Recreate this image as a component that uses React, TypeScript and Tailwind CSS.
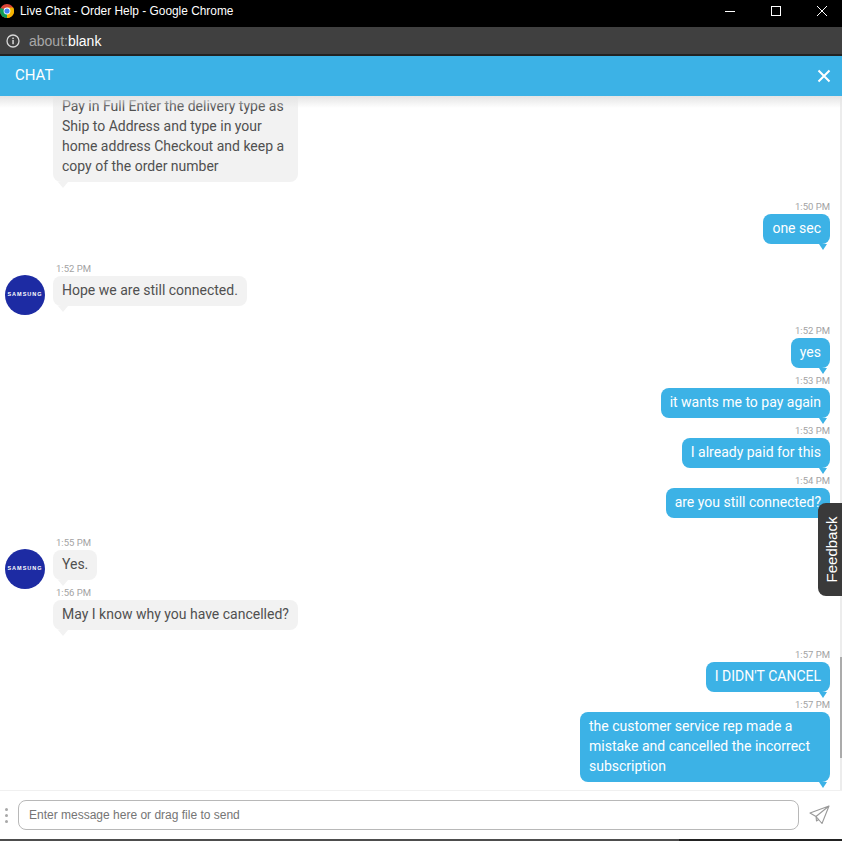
import React from "react";

const font = "font-['Roboto',sans-serif]";

function Avatar() {
  return (
    <div className="w-10 h-10 rounded-full bg-[#1d2ba3] flex items-center justify-center shrink-0 mt-[-1px] mb-[-9px]">
      <span className="font-['Liberation_Sans',sans-serif] font-bold text-white text-[5.5px] tracking-[1px] leading-none">SAMSUNG</span>
    </div>
  );
}

function AgentMsg({ time, lines, avatar, wide }: { time?: string; lines: string[]; avatar?: boolean; wide?: boolean }) {
  return (
    <div className="flex items-start pl-[5px]">
      <div className="w-10 shrink-0 pt-[16px]">{avatar && <Avatar />}</div>
      <div className="ml-2 flex flex-col items-start">
        {time && <div className="h-4 pl-[3px] pt-[1px] text-[9.5px] leading-4 text-[#a3a3a3]">{time}</div>}
        <div className={`relative bg-[#f2f2f2] rounded-lg pl-[9px] pr-[9px] pt-[4px] pb-[6px] text-[14px] leading-5 text-[#505050] whitespace-nowrap ${wide ? "w-[245px]" : ""}`}>
          {lines.map((l) => (
            <div key={l}>{l}</div>
          ))}
          <div className="absolute left-[5px] top-full w-0 h-0 border-l-[5px] border-r-[5px] border-t-[6px] border-l-transparent border-r-transparent border-t-[#f2f2f2]" />
        </div>
      </div>
    </div>
  );
}

function UserMsg({ time, lines, wide }: { time: string; lines: string[]; wide?: boolean }) {
  return (
    <div className="flex flex-col items-end pr-3">
      <div className="h-4 pt-[1px] text-[9.5px] leading-4 text-[#a3a3a3]">{time}</div>
      <div className={`relative bg-[#3cb2e6] rounded-lg pl-[9px] pr-[9px] pt-[4px] pb-[6px] text-[14px] leading-5 text-white whitespace-nowrap ${wide ? "w-[250px]" : ""}`}>
        {lines.map((l) => (
          <div key={l}>{l}</div>
        ))}
        <div className="absolute right-[3px] top-full w-0 h-0 border-l-[4px] border-r-[4px] border-t-[6px] border-l-transparent border-r-transparent border-t-[#3cb2e6]" />
      </div>
    </div>
  );
}

export default function App() {
  return (
    <div className={`w-[842px] h-[841px] flex flex-col overflow-hidden bg-white relative ${font}`}>
      {/* window title bar */}
      <div className="h-[27px] bg-black flex items-center shrink-0 pb-[5px]">
        <svg width="14" height="14" viewBox="0 0 14 14" className="shrink-0">
          <circle cx="7" cy="7" r="7" fill="#db4437" />
          <path d="M7 7 L7 14 A7 7 0 0 0 13.2 3.5 L7 3.5 Z" fill="#f4b400" />
          <path d="M7 7 L7 14 A7 7 0 0 1 0.8 3.8 Z" fill="#0f9d58" />
          <circle cx="7" cy="7" r="3.4" fill="#fff" />
          <circle cx="7" cy="7" r="2.6" fill="#4285f4" />
        </svg>
        <span className="ml-[6px] mt-[2px] font-['Liberation_Sans',sans-serif] text-[11.9px] text-white whitespace-nowrap">Live Chat - Order Help - Google Chrome</span>
        <div className="ml-auto flex items-center">
          <svg width="12" height="12" viewBox="0 0 12 12" className="mr-[34px]">
            <path d="M1 6.5H11" stroke="#fff" strokeWidth="1" />
          </svg>
          <svg width="12" height="12" viewBox="0 0 12 12" className="mr-[34px]">
            <rect x="1.5" y="1.5" width="9" height="9" fill="none" stroke="#fff" strokeWidth="1" />
          </svg>
          <svg width="12" height="12" viewBox="0 0 12 12" className="mr-[14px]">
            <path d="M1 1L11 11M11 1L1 11" stroke="#fff" strokeWidth="1" />
          </svg>
        </div>
      </div>
      {/* address bar */}
      <div className="h-[27px] bg-[#404040] flex items-center shrink-0 pl-[6px] pt-[1px]">
        <svg width="14" height="14" viewBox="0 0 14 14">
          <circle cx="7" cy="7" r="6" fill="none" stroke="#d8d8d8" strokeWidth="1.3" />
          <rect x="6.3" y="6" width="1.5" height="4.2" fill="#d8d8d8" />
          <rect x="6.3" y="3.6" width="1.5" height="1.5" fill="#d8d8d8" />
        </svg>
        <span className="ml-[9px] font-['Liberation_Sans',sans-serif] text-[14px] text-[#a8a8a8]">
          about:<span className="text-white">blank</span>
        </span>
      </div>
      <div className="h-[2px] bg-[#222222] shrink-0" />
      {/* header */}
      <div className="h-10 bg-[#3cb2e6] flex items-center justify-between pl-[15px] pr-[11px] pb-[1px] shrink-0 relative z-10">
        <span className="text-[15px] text-white">CHAT</span>
        <svg width="14" height="14" viewBox="0 0 14 14">
          <path d="M1.5 1.5L12.5 12.5M12.5 1.5L1.5 12.5" stroke="#fff" strokeWidth="2" />
        </svg>
      </div>
      {/* messages */}
      <div className="relative flex-1 min-h-0 flex flex-col justify-end overflow-hidden pb-2">
        <div className="absolute top-0 left-0 right-0 h-3 bg-gradient-to-b from-[#e4e4e4] to-transparent z-10" />
        <AgentMsg wide lines={["Pay in Full Enter the delivery type as", "Ship to Address and type in your", "home address Checkout and keep a", "copy of the order number"]} />
        <div className="h-4 shrink-0" />
        <UserMsg time="1:50 PM" lines={["one sec"]} />
        <div className="h-4 shrink-0" />
        <AgentMsg time="1:52 PM" lines={["Hope we are still connected."]} avatar />
        <div className="h-4 shrink-0" />
        <UserMsg time="1:52 PM" lines={["yes"]} />
        <div className="h-1 shrink-0" />
        <UserMsg time="1:53 PM" lines={["it wants me to pay again"]} />
        <div className="h-1 shrink-0" />
        <UserMsg time="1:53 PM" lines={["I already paid for this"]} />
        <div className="h-1 shrink-0" />
        <UserMsg time="1:54 PM" lines={["are you still connected?"]} />
        <div className="h-4 shrink-0" />
        <AgentMsg time="1:55 PM" lines={["Yes."]} avatar />
        <div className="h-1 shrink-0" />
        <AgentMsg time="1:56 PM" lines={["May I know why you have cancelled?"]} />
        <div className="h-4 shrink-0" />
        <UserMsg time="1:57 PM" lines={["I DIDN'T CANCEL"]} />
        <div className="h-1 shrink-0" />
        <UserMsg wide time="1:57 PM" lines={["the customer service rep made a", "mistake and cancelled the incorrect", "subscription"]} />
        <div className="absolute right-0 top-0 bottom-0 w-[2px] bg-[#ececec]" />
        <div className="absolute right-0 bottom-[32px] w-[2px] h-[101px] bg-[#ababab]" />
      </div>
      {/* composer */}
      <div className="h-[49px] border-t border-[#f0f0f0] flex items-center shrink-0 relative bg-white">
        <div className="w-[18px] flex flex-col items-center gap-[3px] shrink-0 ml-[-3px]">
          <div className="w-[3px] h-[3px] rounded-full bg-[#a8a8a8]" />
          <div className="w-[3px] h-[3px] rounded-full bg-[#a8a8a8]" />
          <div className="w-[3px] h-[3px] rounded-full bg-[#a8a8a8]" />
        </div>
        <div className="ml-[3px] w-[781px] h-[30px] border border-[#b8b8b8] rounded-lg flex items-center pl-[10px] font-['Liberation_Sans',sans-serif] text-[12px] text-[#757575]">
          Enter message here or drag file to send
        </div>
        <svg width="21" height="20" viewBox="0 0 21 20" className="ml-[10px]">
          <path d="M20 1L1 8L7 11.5L13 18.5Z M20 1L7 11.5L7.5 16L10 14" fill="none" stroke="#999" strokeWidth="1.1" strokeLinejoin="round" />
        </svg>
      </div>
      <div className="h-[2px] flex shrink-0">
        <div className="w-[679px] bg-[#4d4d4d]" />
        <div className="flex-1 bg-[#222222]" />
      </div>
      {/* feedback tab */}
      <div className="absolute right-0 top-[503px] w-6 h-[93px] bg-[#3a3a3a] rounded-l-lg flex items-center justify-center pl-[3px] z-20">
        <span className="-rotate-90 whitespace-nowrap font-['Liberation_Sans',sans-serif] text-[15px] leading-none text-white">Feedback</span>
      </div>
    </div>
  );
}
